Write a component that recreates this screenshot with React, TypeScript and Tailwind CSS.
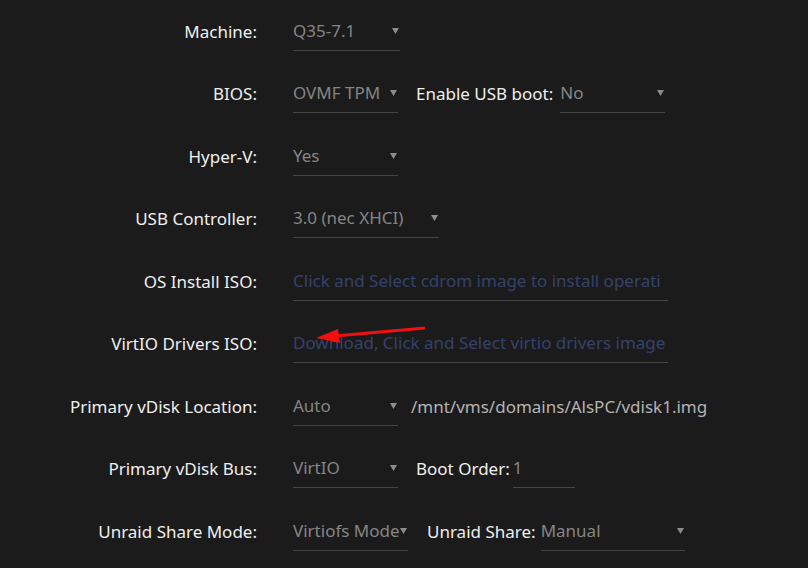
import React from "react";

function Arrow() {
  return (
    <svg width="7" height="6" viewBox="0 0 7 6" className="shrink-0">
      <polygon points="0,0 7,0 3.5,6" fill="#8c8c8c" />
    </svg>
  );
}

function Select({ value, w }: { value: string; w: string }) {
  return (
    <div className={`${w} h-[39px] border-b border-[#454545] flex items-center justify-between pr-[1px] shrink-0`}>
      <span className="text-[#858585] leading-[38px] whitespace-nowrap">{value}</span>
      <Arrow />
    </div>
  );
}

function Input({ value, w, blue }: { value: string; w: string; blue?: boolean }) {
  return (
    <div className={`${w} h-[39px] border-b border-[#454545] overflow-hidden shrink-0`}>
      <span className={`${blue ? "text-[#35426a]" : "text-[#858585]"} leading-[38px] whitespace-nowrap`}>{value}</span>
    </div>
  );
}

function Row({ label, children }: { label: string; children: React.ReactNode }) {
  return (
    <div className="flex items-center h-[62.5px]">
      <div className="w-[257px] text-right text-[#efefef] whitespace-nowrap shrink-0">{label}</div>
      <div className="ml-[36px] flex items-center">{children}</div>
    </div>
  );
}

function Label({ text, className }: { text: string; className: string }) {
  return <span className={`text-[#efefef] whitespace-nowrap ${className}`}>{text}</span>;
}

export default function App() {
  return (
    <div
      className="relative w-[808px] h-[568px] bg-[#1b1b1b] overflow-hidden text-[17px]"
      style={{ fontFamily: '"Noto Sans", "Open Sans", sans-serif' }}
    >
      <Row label="Machine:">
        <Select value="Q35-7.1" w="w-[107px]" />
      </Row>
      <Row label="BIOS:">
        <Select value="OVMF TPM" w="w-[105px]" />
        <Label text="Enable USB boot:" className="ml-[18px] mr-[7px]" />
        <Select value="No" w="w-[105px]" />
      </Row>
      <Row label="Hyper-V:">
        <Select value="Yes" w="w-[105px]" />
      </Row>
      <Row label="USB Controller:">
        <Select value="3.0 (nec XHCI)" w="w-[146px]" />
      </Row>
      <Row label="OS Install ISO:">
        <Input value="Click and Select cdrom image to install operati" w="w-[375px]" blue />
      </Row>
      <Row label="VirtIO Drivers ISO:">
        <Input value="Download, Click and Select virtio drivers image" w="w-[375px]" blue />
      </Row>
      <Row label="Primary vDisk Location:">
        <Select value="Auto" w="w-[105px]" />
        <span className="ml-[13px] text-[#b4b4b4] whitespace-nowrap">/mnt/vms/domains/AlsPC/vdisk1.img</span>
      </Row>
      <Row label="Primary vDisk Bus:">
        <Select value="VirtIO" w="w-[105px]" />
        <Label text="Boot Order:" className="ml-[18px] mr-[3px]" />
        <Input value="1" w="w-[62px]" />
      </Row>
      <Row label="Unraid Share Mode:">
        <Select value="Virtiofs Mode" w="w-[115px]" />
        <Label text="Unraid Share:" className="ml-[19px] mr-[5px]" />
        <Select value="Manual" w="w-[144px]" />
      </Row>

      <svg className="absolute left-0 top-0 pointer-events-none" width="808" height="568">
        <line x1="425" y1="328" x2="335" y2="336" stroke="#f01010" strokeWidth="3" />
        <polygon points="316,338 338,329 340,343" fill="#f01010" />
      </svg>
    </div>
  );
}
